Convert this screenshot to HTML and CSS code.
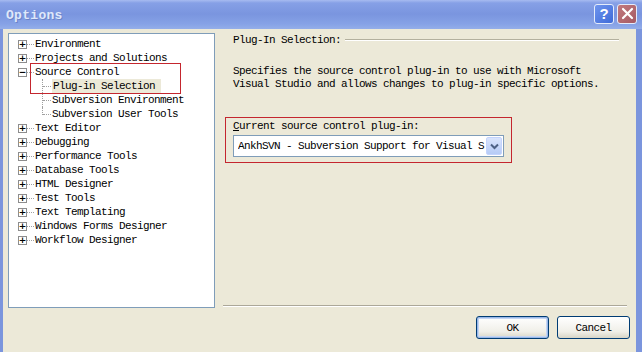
FILE: index.html
```html
<!DOCTYPE html>
<html>
<head>
<meta charset="utf-8">
<link rel="stylesheet" href="styles.css">
</head>
<body>
<div class="window">
  <div class="titlebar">
    <span class="title">Options</span>
    <div class="tbtns">
      <span class="tbtn help">?</span>
      <span class="tbtn close"><svg width="13" height="13" viewBox="0 0 13 13"><path d="M2 2 L11 11 M11 2 L2 11" stroke="#fff" stroke-width="2.2" stroke-linecap="round"/></svg></span>
    </div>
  </div>
  <div class="frame">
    <div class="main">
      <div class="tree">
        <div class="node"><span class="box">+</span><span class="dots"></span>Environment</div>
        <div class="node"><span class="box">+</span><span class="dots"></span>Projects and Solutions</div>
        <div class="node"><span class="box">−</span><span class="dots"></span>Source Control</div>
        <div class="node child"><span class="cdots"></span><span class="sel">Plug-in Selection</span></div>
        <div class="node child"><span class="cdots"></span>Subversion Environment</div>
        <div class="node child"><span class="cdots last"></span>Subversion User Tools</div>
        <div class="node"><span class="box">+</span><span class="dots"></span>Text Editor</div>
        <div class="node"><span class="box">+</span><span class="dots"></span>Debugging</div>
        <div class="node"><span class="box">+</span><span class="dots"></span>Performance Tools</div>
        <div class="node"><span class="box">+</span><span class="dots"></span>Database Tools</div>
        <div class="node"><span class="box">+</span><span class="dots"></span>HTML Designer</div>
        <div class="node"><span class="box">+</span><span class="dots"></span>Test Tools</div>
        <div class="node"><span class="box">+</span><span class="dots"></span>Text Templating</div>
        <div class="node"><span class="box">+</span><span class="dots"></span>Windows Forms Designer</div>
        <div class="node"><span class="box">+</span><span class="dots"></span>Workflow Designer</div>
        <div class="redbox tree-mark"></div>
      </div>
      <div class="panel">
        <div class="heading"><span>Plug-In Selection:</span><span class="hline"></span></div>
        <p class="desc">Specifies the source control plug-in to use with Microsoft<br>Visual Studio and allows changes to plug-in specific options.</p>
        <div class="pluginbox">
          <div class="label"><u>C</u>urrent source control plug-in:</div>
          <div class="combo"><span class="ctext">AnkhSVN - Subversion Support for Visual S</span><span class="drop"><svg width="9" height="7" viewBox="0 0 9 7"><path d="M1 1.5 L4.5 5 L8 1.5" fill="none" stroke="#4d6185" stroke-width="2"/></svg></span></div>
        </div>
        <div class="spacer"></div>
        <div class="sep"></div>
      </div>
    </div>
    <div class="buttons">
      <button class="btn ok">OK</button>
      <button class="btn">Cancel</button>
    </div>
  </div>
</div>
</body>
</html>
```
FILE: styles.css
```css
* { box-sizing: border-box; }
html, body { margin: 0; padding: 0; }
body {
  width: 642px; height: 352px; overflow: hidden;
  font-family: "Liberation Mono", "DejaVu Sans Mono", monospace;
  font-size: 11px; letter-spacing: -0.6px; color: #000;
}
.window { width: 642px; height: 352px; background: #7b95dd; display: flex; flex-direction: column; }
.titlebar {
  height: 29px; flex: none;
  background: linear-gradient(#a7bbf0 0px, #86a0e6 3px, #7a95df 14px, #86a2e6 24px, #94aee9 29px);
  display: flex; align-items: center; justify-content: space-between;
  padding: 0 5px 0 6px;
}
.title { font-weight: bold; font-size: 13px; letter-spacing: 0.3px; color: #dfe8fb; text-shadow: 1px 1px 0 #6d84c8; padding-top: 2px; }
.tbtns { display: flex; gap: 3px; padding-bottom: 2px; }
.tbtn {
  width: 20px; height: 20px; border: 1px solid #e4ecfb; border-radius: 3px;
  display: flex; align-items: center; justify-content: center;
  color: #fff; font-family: "Liberation Sans", sans-serif; font-weight: bold; font-size: 15px; letter-spacing: 0;
}
.help { background: linear-gradient(135deg, #6f95ee, #3e6ad8); }
.close { background: linear-gradient(135deg, #c27a7e, #a55a63); }
.frame {
  flex: 1; background: #ece9d8; margin: 0 6px 0 3px;
  display: flex; flex-direction: column;
}
.main { display: flex; padding: 4px 0 0 5px; height: 279px; flex: none; }
.tree {
  position: relative;
  width: 207px; height: 275px; background: #fff; border: 1px solid #7f9db9;
  padding: 3px 0 0 9px;
}
.node { height: 14px; line-height: 14px; display: flex; align-items: center; white-space: nowrap; }
.box {
  width: 9px; height: 9px; border: 1px solid #8d8d8d; background: #fff;
  font-family: "DejaVu Sans", sans-serif; font-size: 9px; line-height: 7px; letter-spacing: 0;
  display: flex; align-items: center; justify-content: center; flex: none; font-weight: bold;
}
.dots { width: 7px; border-top: 1px dotted #a0a0a0; margin: 0 1px 0 0; flex: none; }
.child { padding-left: 24px; }
.cdots { width: 9px; height: 14px; border-left: 1px dotted #a0a0a0; position: relative; flex: none; margin-right: 1px; }
.cdots.last { height: 8px; align-self: flex-start; }
.cdots::after { content: ""; position: absolute; left: 0; top: 7px; width: 8px; border-top: 1px dotted #a0a0a0; }
.sel { background: #ece9d8; padding: 0 6px 0 1px; }
.redbox { border: 1px solid #c4262e; }
.tree-mark { position: absolute; left: 21px; top: 29px; width: 151px; height: 31px; }
.panel { flex: 1; display: flex; flex-direction: column; padding: 0 8px 0 10px; }
.heading { display: flex; align-items: center; gap: 4px; padding-left: 8px; margin-top: 1px; height: 12px; }
.hline { flex: 1; border-top: 1px solid #b3b09e; border-bottom: 1px solid #fff; height: 0; margin-right: 9px; }
.desc { margin: 19px 0 0 8px; line-height: 13px; }
.pluginbox { width: 287px; margin-top: 26px; border: 1px solid #c4262e; padding: 2px 7px 5px 7px; }
.label { line-height: 12px; }
.combo {
  margin-top: 3px; height: 22px; background: #fff; border: 1px solid #7f9db9;
  display: flex; align-items: center; padding: 0 1px 0 4px;
}
.ctext { flex: 1; white-space: nowrap; overflow: hidden; }
.drop {
  width: 16px; height: 18px; border-radius: 2px;
  background: linear-gradient(#d9e4fd, #b6cbf6); border: 1px solid #c3d3fd;
  display: flex; align-items: center; justify-content: center;
}
.spacer { flex: 1; }
.sep { border-top: 1px solid #aca899; border-bottom: 1px solid #fff; margin: 0 1px 1px -2px; }
.buttons { display: flex; justify-content: flex-end; gap: 8px; padding: 8px 6px 0 0; }
.btn {
  width: 73px; height: 23px; background: linear-gradient(#fff, #f0efe8 70%, #d8d5c6);
  border: 1px solid #003c74; border-radius: 3px;
  font-family: "Liberation Mono", monospace; font-size: 11px; letter-spacing: -0.6px; color: #000; padding: 0;
}
.ok { box-shadow: inset 0 0 0 1px #99b8e8, inset 0 0 0 2px #c4d5f3; }
```
